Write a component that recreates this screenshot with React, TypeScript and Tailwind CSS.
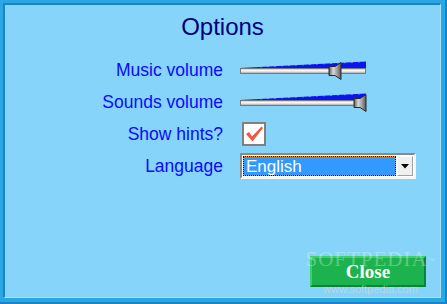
import React from 'react'

const labelFont = { fontFamily: '"Liberation Sans", Arial, sans-serif' }
const serifFont = { fontFamily: '"Liberation Serif", "Times New Roman", serif' }

function VolumeSlider({ thumb }: { thumb: number }) {
  // thumb = left x of the speaker-shaped knob, track is 126px wide
  return (
    <svg width="128" height="32" viewBox="0 0 128 32" className="block">
      <defs>
        <linearGradient id="track" x1="0" y1="0" x2="0" y2="1">
          <stop offset="0" stopColor="#b8b8b8" />
          <stop offset="0.45" stopColor="#ffffff" />
          <stop offset="1" stopColor="#9a9a9a" />
        </linearGradient>
        <linearGradient id="knob" x1="0" y1="0" x2="1" y2="0">
          <stop offset="0" stopColor="#5a5a5a" />
          <stop offset="0.35" stopColor="#d8d8d8" />
          <stop offset="0.7" stopColor="#9a9a9a" />
          <stop offset="1" stopColor="#555555" />
        </linearGradient>
      </defs>
      <polygon points="0,14 126,7.5 126,14" fill="#0a14ee" />
      <line x1="20" y1="13" x2="120" y2="8" stroke="#a8b8ff" strokeWidth="0.6" strokeDasharray="2 5" />
      <rect x="0.5" y="14.5" width="125" height="5" fill="url(#track)" stroke="#7a7a7a" />
      <path
        d={`M${thumb},12.5 H${thumb + 6} L${thumb + 12},8.5 V25.5 L${thumb + 6},21.5 H${thumb} Z`}
        fill="url(#knob)"
        stroke="#2a2a2a"
        strokeWidth="1"
      />
    </svg>
  )
}

function CheckBox() {
  return (
    <div className="ml-[2px] w-[24px] h-[24px] border-2 border-[#808080] bg-white flex items-center justify-center">
      <svg width="20" height="20" viewBox="0 0 20 20">
        <polygon points="2,10 5,8 8,12.5 17.5,2.5 19,4 8.5,17.5" fill="#ea5a45" />
      </svg>
    </div>
  )
}

function LanguageSelect() {
  return (
    <div className="w-[176px] h-[26px] border-2 border-t-[#8a8a8a] border-l-[#8a8a8a] border-b-[#f6f6f6] border-r-[#f6f6f6] bg-white flex p-px gap-px">
      <div className="flex-1 bg-[#ff9a00] border border-dotted border-[#111]">
        <div className="h-full bg-[#3399ff] flex items-center pl-[2px]">
          <span className="text-white text-[17px] leading-none" style={labelFont}>
            English
          </span>
        </div>
      </div>
      <div className="w-[16px] bg-[#f0f0f0] border border-t-white border-l-white border-b-[#a0a0a0] border-r-[#a0a0a0] flex items-center justify-center">
        <svg width="8" height="5" viewBox="0 0 8 5">
          <polygon points="0,0 8,0 4,4.5" fill="#000" />
        </svg>
      </div>
    </div>
  )
}

export default function App() {
  const rows: { label: string; control: React.ReactNode }[] = [
    { label: 'Music volume', control: <VolumeSlider thumb={89} /> },
    { label: 'Sounds volume', control: <VolumeSlider thumb={114} /> },
    { label: 'Show hints?', control: <CheckBox /> },
    { label: 'Language', control: <LanguageSelect /> },
  ]

  return (
    <div className="w-[447px] h-[304px] bg-[#2ba7e6] border-r-2 border-b-2 border-[#1a84c4] pt-[3px] pl-[3px] pr-[4px] pb-[4px] flex">
      <div className="relative flex-1 flex flex-col bg-[#86d4fa] border-t-2 border-l-2 border-t-[#1a84c4] border-l-[#1a84c4] border-b border-r border-b-[#a9e2fb] border-r-[#a9e2fb]">
        {/* Title */}
        <h1 className="mt-[8px] text-center text-[24px] leading-[28px] text-[#00007c]" style={labelFont}>
          Options
        </h1>

        {/* Settings */}
        <div className="mt-[13px] grid grid-cols-[218px_auto] auto-rows-[32px] gap-x-[17px]">
          {rows.map((row) => (
            <React.Fragment key={row.label}>
              <div className="text-right text-[17.5px] leading-[32px] text-[#0a0aff]" style={labelFont}>
                {row.label}
              </div>
              <div className="flex items-center">{row.control}</div>
            </React.Fragment>
          ))}
        </div>

        {/* Footer */}
        <div className="mt-auto flex justify-end pr-[14px] pb-[10px]">
          <button
            className="w-[116px] h-[31px] bg-[#1cb34e] border-2 border-t-[#3ccf6c] border-l-[#3ccf6c] border-b-[#0b8436] border-r-[#0b8436] flex items-center justify-center"
          >
            <span className="text-[19px] font-bold text-[#fffff2] leading-none" style={serifFont}>
              Close
            </span>
          </button>
        </div>

        {/* Watermark over the button */}
        <div className="pointer-events-none absolute left-[298px] top-[242px] w-[135px] flex flex-col items-center">
          <div className="text-[21px] leading-[24px] tracking-[1px] text-white/30" style={serifFont}>
            SOFTPEDIA<sup className="text-[7px]">™</sup>
          </div>
          <div className="mt-[12px] text-[11px] leading-[12px] text-[#d8d8d8]/60" style={labelFont}>
            www.softpedia.com
          </div>
        </div>
      </div>
    </div>
  )
}
